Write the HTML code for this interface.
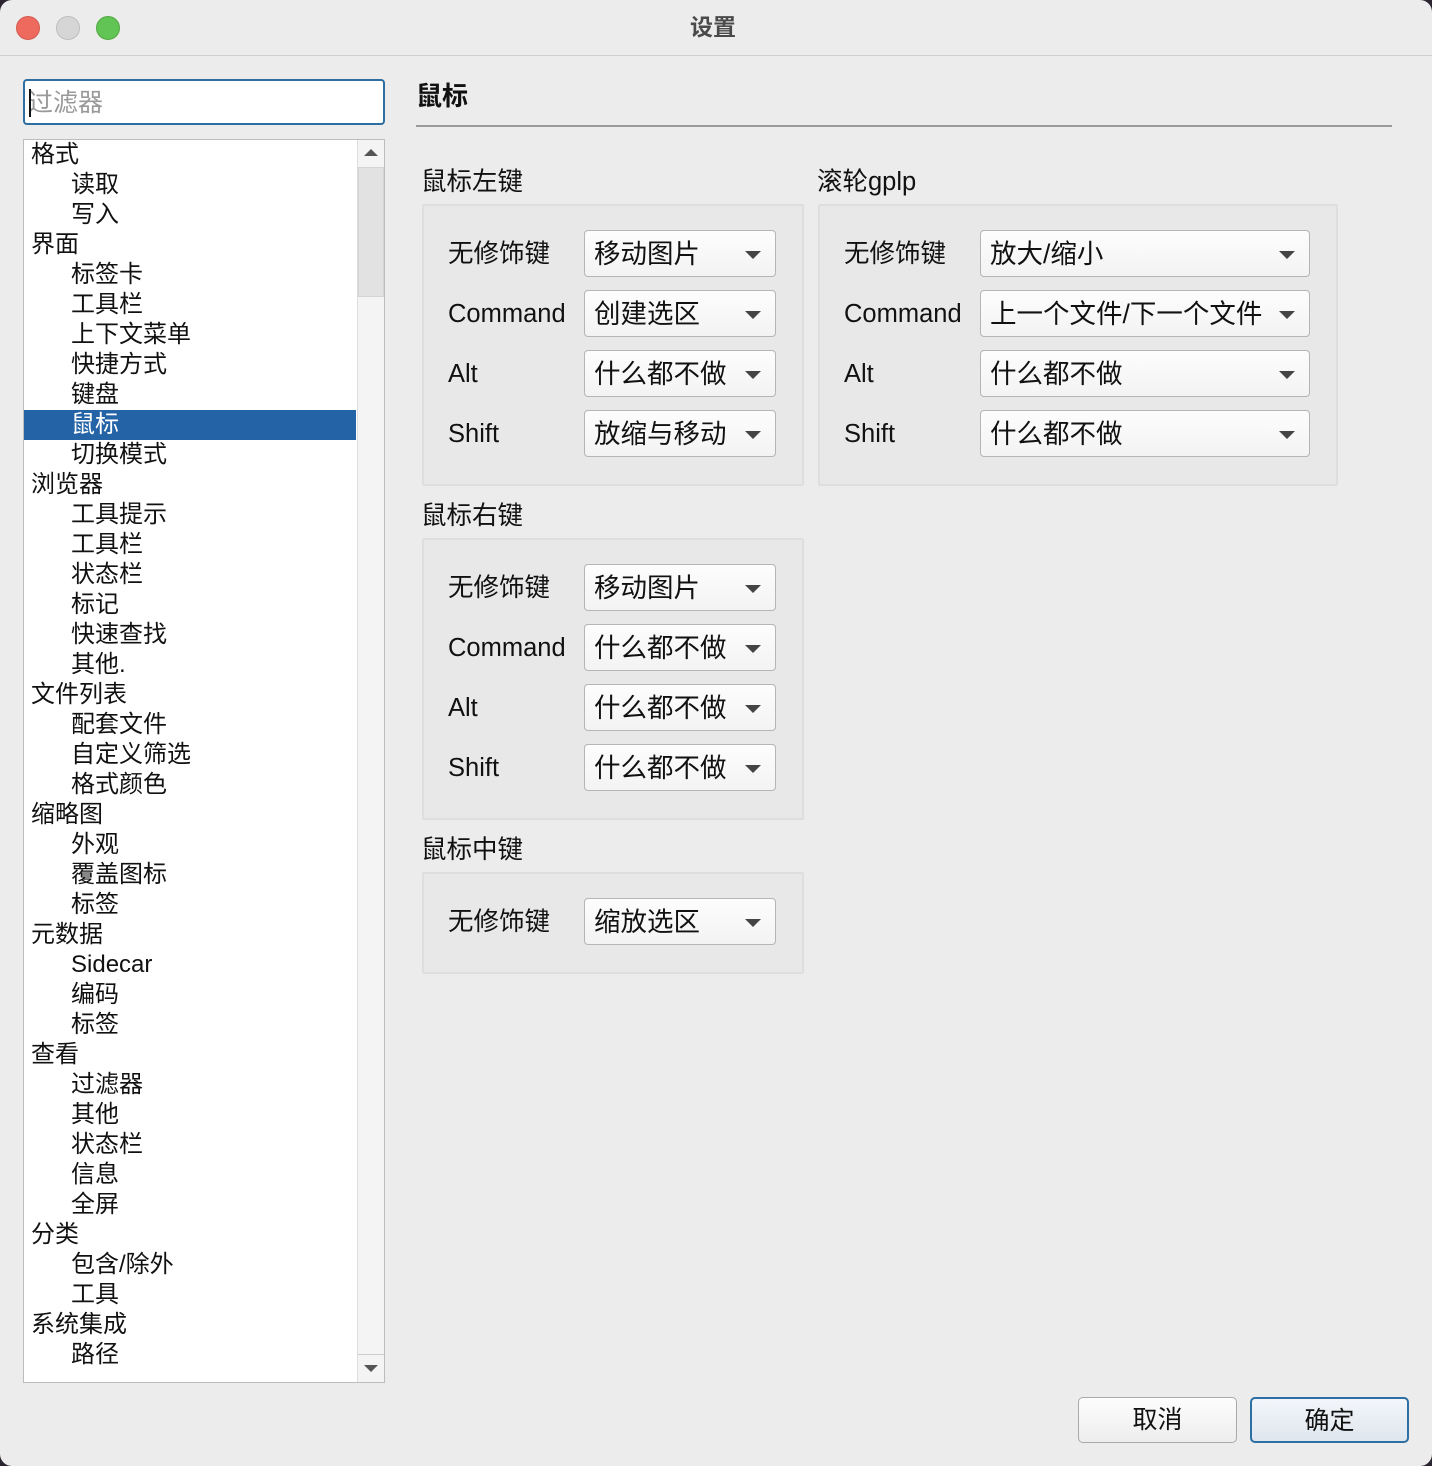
<!DOCTYPE html>
<html><head><meta charset="utf-8"><style>
*{box-sizing:border-box;margin:0;padding:0}
body{width:1432px;height:1466px;background:#2a2530;font-family:"Liberation Sans","Noto Sans CJK SC",sans-serif;color:#111;overflow:hidden;position:relative}
.win{position:absolute;left:0;top:0;width:1432px;height:1466px;background:#ececec;border-radius:12px;overflow:hidden}
.title{position:absolute;left:0;top:0;width:1432px;height:56px;border-bottom:1px solid #cfcfcf;text-align:center;line-height:54px;font-size:23px;font-weight:bold;color:#4a4a4a;padding-right:6px}
.dot{position:absolute;top:16px;width:24px;height:24px;border-radius:50%}
.a{position:absolute}
.filter{left:23px;top:79px;width:362px;height:46px;border:2px solid #2d6ea3;border-radius:4px;background:#fff;font-size:25px;color:#999;padding-left:3px;line-height:44px}
.filter i{position:absolute;left:4px;top:8px;width:2px;height:28px;background:#111}
.tree{left:23px;top:139px;width:362px;height:1244px;border:1px solid #bcbcbc;background:#fff}
.row{position:absolute;left:0;width:332px;height:30px;line-height:30px;font-size:24px}
.sb{position:absolute;left:333px;top:0;width:27px;height:1242px;background:#f4f4f4;border-left:1px solid #ddd}
.grp{position:absolute;background:#e8e8e8;border:2px solid #dedede;border-radius:2px}
.lbl{position:absolute;font-size:25.5px;line-height:32px}
.cb{position:absolute;height:47px;background:linear-gradient(#fdfdfd,#f3f3f3);border:1px solid #b5b5b5;border-radius:4px;font-size:26.5px;line-height:47px;padding-left:9px}
.cb:after{content:"";position:absolute;right:14px;top:20px;border-left:8px solid transparent;border-right:8px solid transparent;border-top:8px solid #444}
.btn{position:absolute;top:1397px;width:159px;height:46px;border-radius:5px;font-size:25px;text-align:center;line-height:44px;background:linear-gradient(#fdfdfd,#ededed)}
</style></head><body><div class="win">
<div class="title">设置</div>
<div class="dot" style="left:16px;background:#ee6a5e;border:1px solid #d55a4f"></div>
<div class="dot" style="left:56px;background:#d6d6d6;border:1px solid #bdbdbd"></div>
<div class="dot" style="left:96px;background:#61c454;border:1px solid #52a944"></div>

<div class="a filter"><i></i>过滤器</div>
<div class="a tree">
<div class="row" style="top:0;padding-left:7px">格式</div>
<div class="row" style="top:30px;padding-left:47px">读取</div>
<div class="row" style="top:60px;padding-left:47px">写入</div>
<div class="row" style="top:90px;padding-left:7px">界面</div>
<div class="row" style="top:120px;padding-left:47px">标签卡</div>
<div class="row" style="top:150px;padding-left:47px">工具栏</div>
<div class="row" style="top:180px;padding-left:47px">上下文菜单</div>
<div class="row" style="top:210px;padding-left:47px">快捷方式</div>
<div class="row" style="top:240px;padding-left:47px">键盘</div>
<div class="row" style="top:270px;padding-left:47px;background:#2463a5;color:#fff">鼠标</div>
<div class="row" style="top:300px;padding-left:47px">切换模式</div>
<div class="row" style="top:330px;padding-left:7px">浏览器</div>
<div class="row" style="top:360px;padding-left:47px">工具提示</div>
<div class="row" style="top:390px;padding-left:47px">工具栏</div>
<div class="row" style="top:420px;padding-left:47px">状态栏</div>
<div class="row" style="top:450px;padding-left:47px">标记</div>
<div class="row" style="top:480px;padding-left:47px">快速查找</div>
<div class="row" style="top:510px;padding-left:47px">其他.</div>
<div class="row" style="top:540px;padding-left:7px">文件列表</div>
<div class="row" style="top:570px;padding-left:47px">配套文件</div>
<div class="row" style="top:600px;padding-left:47px">自定义筛选</div>
<div class="row" style="top:630px;padding-left:47px">格式颜色</div>
<div class="row" style="top:660px;padding-left:7px">缩略图</div>
<div class="row" style="top:690px;padding-left:47px">外观</div>
<div class="row" style="top:720px;padding-left:47px">覆盖图标</div>
<div class="row" style="top:750px;padding-left:47px">标签</div>
<div class="row" style="top:780px;padding-left:7px">元数据</div>
<div class="row" style="top:810px;padding-left:47px">Sidecar</div>
<div class="row" style="top:840px;padding-left:47px">编码</div>
<div class="row" style="top:870px;padding-left:47px">标签</div>
<div class="row" style="top:900px;padding-left:7px">查看</div>
<div class="row" style="top:930px;padding-left:47px">过滤器</div>
<div class="row" style="top:960px;padding-left:47px">其他</div>
<div class="row" style="top:990px;padding-left:47px">状态栏</div>
<div class="row" style="top:1020px;padding-left:47px">信息</div>
<div class="row" style="top:1050px;padding-left:47px">全屏</div>
<div class="row" style="top:1080px;padding-left:7px">分类</div>
<div class="row" style="top:1110px;padding-left:47px">包含/除外</div>
<div class="row" style="top:1140px;padding-left:47px">工具</div>
<div class="row" style="top:1170px;padding-left:7px">系统集成</div>
<div class="row" style="top:1200px;padding-left:47px">路径</div>
<div class="sb">
<div style="position:absolute;left:6px;top:9px;border-left:7px solid transparent;border-right:7px solid transparent;border-bottom:7px solid #555"></div>
<div style="position:absolute;left:0;top:27px;width:26px;height:130px;background:#e2e2e2;border:1px solid #d4d4d4"></div>
<div style="position:absolute;left:0;top:1214px;width:26px;border-top:1px solid #ccc"></div>
<div style="position:absolute;left:6px;top:1225px;border-left:7px solid transparent;border-right:7px solid transparent;border-top:7px solid #555"></div>
</div>
</div>

<div class="a" style="left:416px;top:80px;font-size:26px;font-weight:bold;line-height:32px">鼠标</div>
<div class="a" style="left:416px;top:125px;width:976px;height:2px;background:#9a9a9a"></div>

<div class="lbl" style="left:421px;top:166px">鼠标左键</div>
<div class="grp" style="left:422px;top:204px;width:382px;height:282px"></div>
<div class="lbl" style="left:448px;top:238px">无修饰键</div><div class="cb" style="left:584px;top:230px;width:192px">移动图片</div>
<div class="lbl" style="left:448px;top:298px">Command</div><div class="cb" style="left:584px;top:290px;width:192px">创建选区</div>
<div class="lbl" style="left:448px;top:358px">Alt</div><div class="cb" style="left:584px;top:350px;width:192px">什么都不做</div>
<div class="lbl" style="left:448px;top:418px">Shift</div><div class="cb" style="left:584px;top:410px;width:192px">放缩与移动</div>

<div class="lbl" style="left:817px;top:166px">滚轮gplp</div>
<div class="grp" style="left:818px;top:204px;width:520px;height:282px"></div>
<div class="lbl" style="left:844px;top:238px">无修饰键</div><div class="cb" style="left:980px;top:230px;width:330px">放大/缩小</div>
<div class="lbl" style="left:844px;top:298px">Command</div><div class="cb" style="left:980px;top:290px;width:330px">上一个文件/下一个文件</div>
<div class="lbl" style="left:844px;top:358px">Alt</div><div class="cb" style="left:980px;top:350px;width:330px">什么都不做</div>
<div class="lbl" style="left:844px;top:418px">Shift</div><div class="cb" style="left:980px;top:410px;width:330px">什么都不做</div>

<div class="lbl" style="left:421px;top:500px">鼠标右键</div>
<div class="grp" style="left:422px;top:538px;width:382px;height:282px"></div>
<div class="lbl" style="left:448px;top:572px">无修饰键</div><div class="cb" style="left:584px;top:564px;width:192px">移动图片</div>
<div class="lbl" style="left:448px;top:632px">Command</div><div class="cb" style="left:584px;top:624px;width:192px">什么都不做</div>
<div class="lbl" style="left:448px;top:692px">Alt</div><div class="cb" style="left:584px;top:684px;width:192px">什么都不做</div>
<div class="lbl" style="left:448px;top:752px">Shift</div><div class="cb" style="left:584px;top:744px;width:192px">什么都不做</div>

<div class="lbl" style="left:421px;top:834px">鼠标中键</div>
<div class="grp" style="left:422px;top:872px;width:382px;height:102px"></div>
<div class="lbl" style="left:448px;top:906px">无修饰键</div><div class="cb" style="left:584px;top:898px;width:192px">缩放选区</div>

<div class="btn" style="left:1078px;border:1px solid #aaa">取消</div>
<div class="btn" style="left:1250px;border:2px solid #2d6ea3;background:linear-gradient(#f3f6fa,#dfe6ee)">确定</div>
</div></body></html>
